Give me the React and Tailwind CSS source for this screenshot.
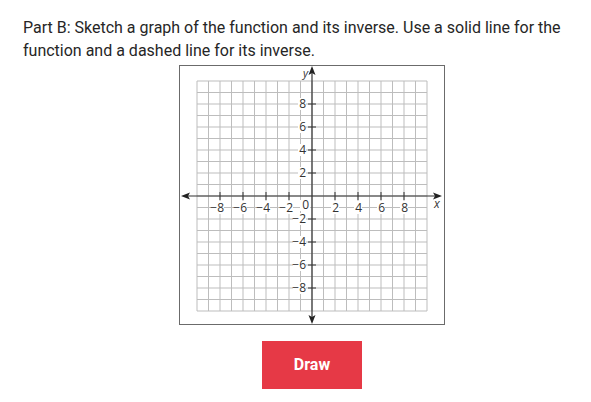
import React from "react";

const CELL = 11.5;
const OX = 132;
const OY = 130;

const Graph = () => {
  const lines = [];
  for (let i = -10; i <= 10; i++) {
    const x = OX + i * CELL;
    const y = OY + i * CELL;
    lines.push(
      <line key={"v" + i} x1={x} y1={OY - 10 * CELL} x2={x} y2={OY + 10 * CELL} stroke="#bdbdbd" strokeWidth="1" />
    );
    lines.push(
      <line key={"h" + i} x1={OX - 10 * CELL} y1={y} x2={OX + 10 * CELL} y2={y} stroke="#bdbdbd" strokeWidth="1" />
    );
  }

  const vals = [-8, -6, -4, -2, 2, 4, 6, 8];

  return (
    <svg width="264" height="258" viewBox="0 0 264 258" style={{ fontFamily: "'Open Sans', 'DejaVu Sans', sans-serif" }}>
      {lines}

      {/* x labels */}
      {vals.map((v) => {
        const x = OX + v * CELL;
        const w = v < 0 ? 13 : 8;
        return (
          <g key={"xl" + v}>
            <rect x={x + 4 - w} y={OY + 5} width={w} height={13} fill="white" />
            <text x={x + 4} y={OY + 16} textAnchor="end" fontSize="12" fill="#333">
              {v < 0 ? "\u2212" + -v : v}
            </text>
          </g>
        );
      })}

      {/* y labels */}
      {vals.map((v) => {
        const y = OY - v * CELL;
        const w = v < 0 ? 13 : 8;
        return (
          <g key={"yl" + v}>
            <rect x={OX - 6 - w} y={y - 6} width={w} height={12} fill="white" />
            <text x={OX - 6} y={y + 4} textAnchor="end" fontSize="12" fill="#333">
              {v < 0 ? "\u2212" + -v : v}
            </text>
          </g>
        );
      })}

      <rect x={OX - 12} y={OY + 4} width={10} height={11} fill="white" />
      <text x={OX - 3} y={OY + 13} textAnchor="end" fontSize="12" fill="#333">0</text>

      {/* ticks */}
      {vals.map((v) => (
        <line key={"tx" + v} x1={OX + v * CELL} y1={OY - 4} x2={OX + v * CELL} y2={OY + 4} stroke="#333" strokeWidth="1" />
      ))}
      {vals.map((v) => (
        <line key={"ty" + v} x1={OX - 4} y1={OY - v * CELL} x2={OX + 4} y2={OY - v * CELL} stroke="#333" strokeWidth="1" />
      ))}

      {/* axes */}
      <line x1="4" y1={OY} x2="259" y2={OY} stroke="#333" strokeWidth="1.2" />
      <line x1={OX} y1="3" x2={OX} y2="255" stroke="#333" strokeWidth="1.2" />
      <path d={`M1 ${OY} L10 ${OY - 3.5} L8 ${OY} L10 ${OY + 3.5} Z`} fill="#222" />
      <path d={`M262 ${OY} L253 ${OY - 3.5} L255 ${OY} L253 ${OY + 3.5} Z`} fill="#222" />
      <path d={`M${OX} 0 L${OX - 3.5} 9 L${OX} 7 L${OX + 3.5} 9 Z`} fill="#222" />
      <path d={`M${OX} 258 L${OX - 3.5} 249 L${OX} 251 L${OX + 3.5} 249 Z`} fill="#222" />

      <text x={OX - 4} y="11" textAnchor="end" fontSize="11" fontStyle="italic" fill="#333">y</text>
      <text x="257" y={OY + 12} textAnchor="middle" fontSize="12" fontStyle="italic" fill="#333">x</text>
    </svg>
  );
};

export default function App() {
  return (
    <div className="w-[591px] h-[402px] bg-white font-['Roboto',sans-serif] text-[#262626]">
      <p className="px-[23px] pt-[16px] text-[16px] leading-[23px]">
        Part B: Sketch a graph of the function and its inverse. Use a solid line for the function and a dashed line for its inverse.
      </p>

      <div className="ml-[179px] mt-[3px] w-[266px] flex flex-col items-center">
        <div className="border border-[#6b6b6b] w-[266px] h-[260px]">
          <Graph />
        </div>
        <button className="mt-[16px] w-[100px] h-[48px] bg-[#e63946] text-white font-bold text-[16px]">
          Draw
        </button>
      </div>
    </div>
  );
}
